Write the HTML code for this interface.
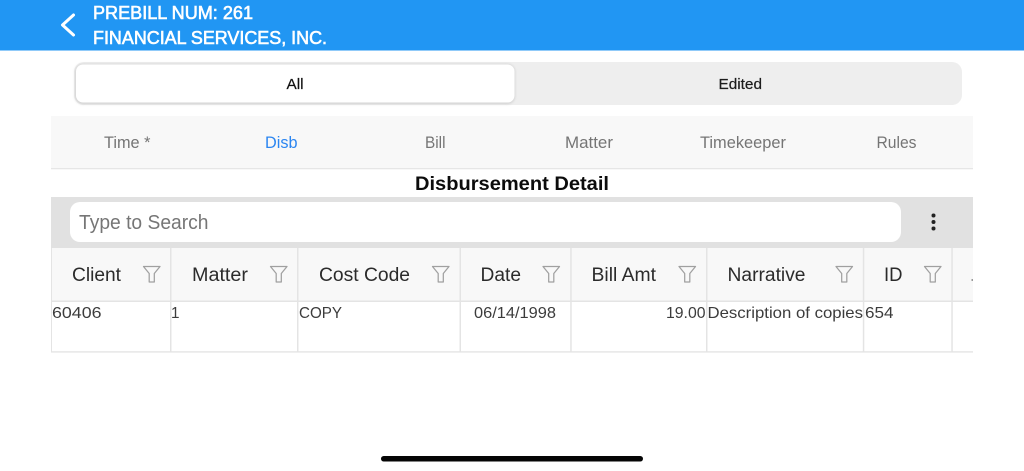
<!DOCTYPE html>
<html><head><meta charset="utf-8">
<style>
html,body{margin:0;padding:0;background:#fff;width:1024px;height:471px;overflow:hidden}
svg{display:block;font-family:"Liberation Sans",sans-serif}
.h{fill:#fff;stroke:#fff;stroke-width:.6;font-size:18px}
.t{fill:#757575;font-size:16.5px}
.c{fill:#2b2b2b;font-size:19px}
.d{fill:#3c3c3c;font-size:16px}
.f{fill:none;stroke:#a0a0a0;stroke-width:1.25;stroke-linejoin:round}
</style></head>
<body>
<svg width="1024" height="471" viewBox="0 0 1024 471" xmlns="http://www.w3.org/2000/svg">
<defs><filter id="s" x="-5%" y="-20%" width="110%" height="140%"><feGaussianBlur stdDeviation="1.2"/></filter></defs>
<rect width="1024" height="50.5" fill="#2196f3"/>
<path d="M73.5 15 L62.5 25 L73.5 35" fill="none" stroke="#fff" stroke-width="3" stroke-linecap="round" stroke-linejoin="round"/>
<text class="h" x="93" y="19" textLength="160" lengthAdjust="spacingAndGlyphs">PREBILL NUM: 261</text>
<text class="h" x="93" y="44" textLength="234" lengthAdjust="spacingAndGlyphs">FINANCIAL SERVICES, INC.</text>

<rect x="74" y="62" width="888" height="43" rx="10" fill="#eeeeee"/>
<rect x="75" y="64" width="440" height="40" rx="8" fill="#cfcfcf" filter="url(#s)"/>
<rect x="76" y="64.5" width="438.5" height="38" rx="7" fill="#fff"/>
<text x="286.5" y="89" font-size="15" fill="#111" stroke="#111" stroke-width=".2" textLength="17" lengthAdjust="spacingAndGlyphs">All</text>
<text x="718.5" y="89" font-size="15" fill="#1c1c1c" stroke="#1c1c1c" stroke-width=".2" textLength="43.5" lengthAdjust="spacingAndGlyphs">Edited</text>

<rect x="51" y="116" width="922" height="53" fill="#f8f8f8"/>
<rect x="51" y="168" width="922" height="1.3" fill="#e6e6e6"/>
<text class="t" x="104" y="148" textLength="46.5" lengthAdjust="spacingAndGlyphs">Time *</text>
<text class="t" x="265" y="148" textLength="32.5" lengthAdjust="spacingAndGlyphs" style="fill:#2c86f1">Disb</text>
<text class="t" x="425" y="148" textLength="20.5" lengthAdjust="spacingAndGlyphs">Bill</text>
<text class="t" x="565" y="148" textLength="48" lengthAdjust="spacingAndGlyphs">Matter</text>
<text class="t" x="700" y="148" textLength="86" lengthAdjust="spacingAndGlyphs">Timekeeper</text>
<text class="t" x="876.5" y="148" textLength="40" lengthAdjust="spacingAndGlyphs">Rules</text>

<text x="415" y="190" font-size="19" font-weight="bold" fill="#0c0c0c" textLength="194" lengthAdjust="spacingAndGlyphs">Disbursement Detail</text>

<rect x="51" y="197" width="922" height="51" fill="#e1e1e1"/>
<rect x="70" y="202" width="831" height="40" rx="10" fill="#fff"/>
<text x="79" y="229" font-size="20" fill="#767676" textLength="129.5" lengthAdjust="spacingAndGlyphs">Type to Search</text>
<circle cx="933.5" cy="215.5" r="2" fill="#222"/>
<circle cx="933.5" cy="222" r="2" fill="#222"/>
<circle cx="933.5" cy="228.5" r="2" fill="#222"/>

<rect x="51" y="248" width="922" height="53" fill="#f8f8f8"/>
<rect x="51" y="300.5" width="922" height="1.5" fill="#e4e4e4"/>
<rect x="51" y="351.2" width="922" height="1.4" fill="#e4e4e4"/>
<g fill="#e4e4e4">
<rect x="51" y="248" width="1" height="104"/>
<rect x="170" y="248" width="1.5" height="104"/>
<rect x="297" y="248" width="1.5" height="104"/>
<rect x="459.5" y="248" width="1.5" height="104"/>
<rect x="570.2" y="248" width="1.5" height="104"/>
<rect x="706" y="248" width="1.5" height="104"/>
<rect x="862.8" y="248" width="1.5" height="104"/>
<rect x="951.3" y="248" width="1.5" height="104"/>
</g>

<text class="c" x="72" y="281" textLength="49" lengthAdjust="spacingAndGlyphs">Client</text>
<text class="c" x="192" y="281" textLength="56" lengthAdjust="spacingAndGlyphs">Matter</text>
<text class="c" x="319" y="281" textLength="91" lengthAdjust="spacingAndGlyphs">Cost Code</text>
<text class="c" x="480.5" y="281" textLength="40.5" lengthAdjust="spacingAndGlyphs">Date</text>
<text class="c" x="591.5" y="281" textLength="64.5" lengthAdjust="spacingAndGlyphs">Bill Amt</text>
<text class="c" x="727.5" y="281" textLength="78" lengthAdjust="spacingAndGlyphs">Narrative</text>
<text class="c" x="884" y="281" textLength="18.5" lengthAdjust="spacingAndGlyphs">ID</text>
<rect x="971.5" y="279" width="1.5" height="2" fill="#999"/>

<path class="f" d="M143.5 266.5 H160 L154.3 273.5 V282 H149.2 V273.5 Z"/>
<path class="f" transform="translate(127 0)" d="M143.5 266.5 H160 L154.3 273.5 V282 H149.2 V273.5 Z"/>
<path class="f" transform="translate(289 0)" d="M143.5 266.5 H160 L154.3 273.5 V282 H149.2 V273.5 Z"/>
<path class="f" transform="translate(399.5 0)" d="M143.5 266.5 H160 L154.3 273.5 V282 H149.2 V273.5 Z"/>
<path class="f" transform="translate(535.5 0)" d="M143.5 266.5 H160 L154.3 273.5 V282 H149.2 V273.5 Z"/>
<path class="f" transform="translate(692.5 0)" d="M143.5 266.5 H160 L154.3 273.5 V282 H149.2 V273.5 Z"/>
<path class="f" transform="translate(781 0)" d="M143.5 266.5 H160 L154.3 273.5 V282 H149.2 V273.5 Z"/>

<text class="d" x="52" y="318" textLength="49.5" lengthAdjust="spacingAndGlyphs">60406</text>
<text class="d" x="171" y="318" textLength="8.5" lengthAdjust="spacingAndGlyphs">1</text>
<text class="d" x="299" y="318" textLength="43" lengthAdjust="spacingAndGlyphs">COPY</text>
<text class="d" x="474" y="318" textLength="82" lengthAdjust="spacingAndGlyphs">06/14/1998</text>
<text class="d" x="666" y="318" textLength="39.5" lengthAdjust="spacingAndGlyphs">19.00</text>
<text class="d" x="707.5" y="318" textLength="155.5" lengthAdjust="spacingAndGlyphs">Description of copies</text>
<text class="d" x="865" y="318" textLength="28.5" lengthAdjust="spacingAndGlyphs">654</text>

<rect x="381" y="456" width="262" height="5.5" rx="2.75" fill="#050505"/>
</svg>
</body></html>
